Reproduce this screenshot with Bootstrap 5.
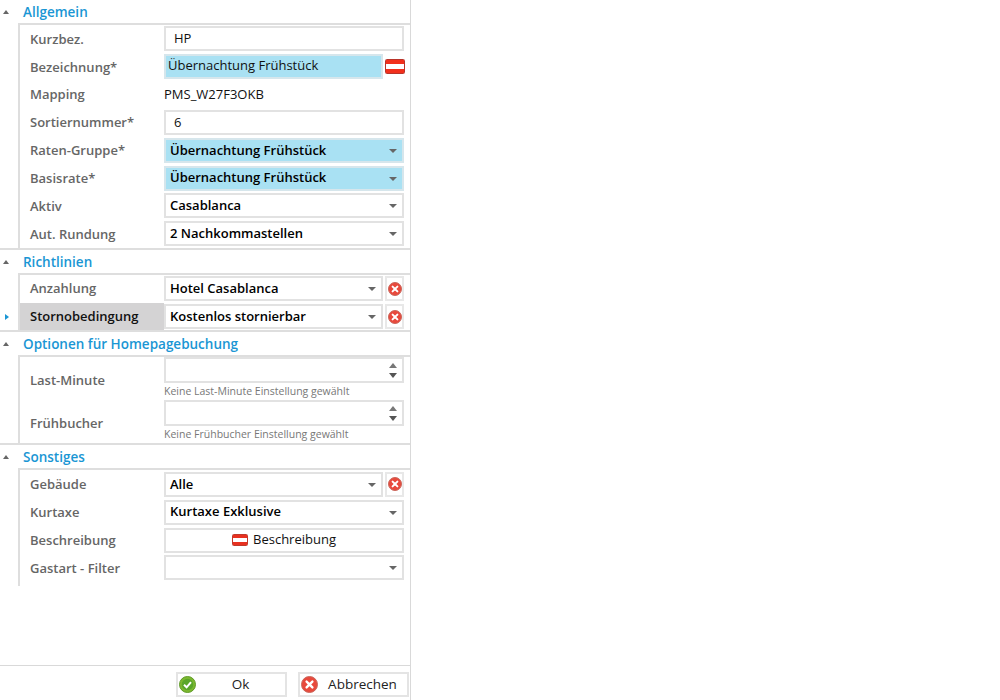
<!DOCTYPE html>
<html lang="de">
<head>
<meta charset="utf-8">
<title>Rate</title>
<link href="https://cdn.jsdelivr.net/npm/bootstrap@5.3.0/dist/css/bootstrap.min.css" rel="stylesheet">
<style>
body{background:#fff;font-family:"Open Sans","Noto Sans",sans-serif;font-size:13px;color:#222;overflow:hidden}
.sheet{width:411px;height:700px;border-right:1px solid #d9d9d9}
.sheet-main{height:665px}
.sec-head{height:24px;color:#1a96d4;font-weight:600;font-size:13.5px;padding-left:23px;position:relative;line-height:24px}
.tri-up{position:absolute;left:3px;top:10px;width:0;height:0;border-left:3.5px solid transparent;border-right:3.5px solid transparent;border-bottom:4px solid #666}
.sec-body{margin-left:18px;border-left:2px solid #dedede;border-top:2px solid #dedede;margin-top:-1px}
.sec-end{border-bottom:2px solid #dedede}
.frow{height:27.85px;position:relative}
.flabel{width:144px;padding-left:10px;color:#666;font-weight:600;flex:none;align-self:stretch;display:flex;align-items:center;padding-top:1px}
.flabel-on{background:#d4d3d4;color:#111}
.tri-right{position:absolute;left:-15px;top:11px;width:0;height:0;border-top:3.5px solid transparent;border-bottom:3.5px solid transparent;border-left:4px solid #1a96d4}
.fbox{width:240px;height:25px;border:2px solid #e2e2e2;background:#fff;flex:none;display:flex;align-items:center;position:relative;color:#111}
.fbox-short{width:219px}
.fbox-input{padding-left:8px;font-weight:400}
.fbox-select{padding-left:4px;font-weight:600;color:#000}
.fbox-select::after{content:"";position:absolute;right:5px;top:9px;border-left:4px solid transparent;border-right:4px solid transparent;border-top:4px solid #666}
.fbox-blue{background:#a9e1f3;border-color:#d6e6ec}
.fbox-note{width:219px;padding-left:2px;align-items:flex-start;font-weight:400;line-height:18px}
.plain-val{font-weight:400;color:#111}
.mini-btn{width:19px;height:25px;border:2px solid #e8e8e8;margin-left:2px;display:flex;align-items:center;justify-content:center;flex:none}
.flag-wrap{margin-left:2px;display:flex;align-items:center}
.spin{height:26px;position:relative}
.spin::before{content:"";position:absolute;right:5px;top:4px;border-left:4px solid transparent;border-right:4px solid transparent;border-bottom:5px solid #777}
.spin::after{content:"";position:absolute;right:5px;top:14px;border-left:4px solid transparent;border-right:4px solid transparent;border-top:5px solid #555}
.tall{height:43px;position:relative}
.tall-label{width:144px;padding-left:10px;color:#666;font-weight:600;flex:none;padding-top:14px}
.hint{font-size:10.5px;color:#777;line-height:14px;margin-top:1px}
.btn-text{font-weight:400;justify-content:center;gap:5px;padding:0}
.foot{height:35px;border-top:1px solid #d9d9d9;padding:6px 0 0 176px;gap:11px}
.foot-btn{height:25px;width:111px;border:2px solid #e4e4e4;background:#fff;font-size:13.5px;color:#222;display:flex;align-items:center;padding:0 0 0 1px;position:relative}
.foot-label{flex:1;text-align:center}
.blue-label{margin-left:0}
</style>
</head>
<body class="m-0">
<div class="sheet d-flex flex-column">
  <div class="sheet-main">
    <section class="sec-end">
      <div class="sec-head"><span class="tri-up"></span>Allgemein</div>
      <div class="sec-body">
        <div class="frow d-flex align-items-center"><div class="flabel">Kurzbez.</div><div class="fbox fbox-input">HP</div></div>
        <div class="frow d-flex align-items-center"><div class="flabel">Bezeichnung*</div><div class="fbox fbox-blue fbox-note">Übernachtung Frühstück</div>
          <div class="flag-wrap"><svg width="20" height="15" viewBox="0 0 20 15"><rect x=".5" y=".5" width="19" height="14" rx="1" fill="#fff" stroke="#b9342a"/><rect x="1" y="1" width="18" height="4" fill="#f2301c"/><rect x="1" y="10" width="18" height="4" fill="#f2301c"/></svg></div></div>
        <div class="frow d-flex align-items-center"><div class="flabel">Mapping</div><div class="plain-val">PMS_W27F3OKB</div></div>
        <div class="frow d-flex align-items-center"><div class="flabel">Sortiernummer*</div><div class="fbox fbox-input">6</div></div>
        <div class="frow d-flex align-items-center"><div class="flabel">Raten-Gruppe*</div><div class="fbox fbox-select fbox-blue">Übernachtung Frühstück</div></div>
        <div class="frow d-flex align-items-center"><div class="flabel">Basisrate*</div><div class="fbox fbox-select fbox-blue">Übernachtung Frühstück</div></div>
        <div class="frow d-flex align-items-center"><div class="flabel">Aktiv</div><div class="fbox fbox-select">Casablanca</div></div>
        <div class="frow d-flex align-items-center"><div class="flabel">Aut. Rundung</div><div class="fbox fbox-select">2 Nachkommastellen</div></div>
      </div>
    </section>
    <section class="sec-end">
      <div class="sec-head"><span class="tri-up"></span>Richtlinien</div>
      <div class="sec-body">
        <div class="frow d-flex align-items-center"><div class="flabel">Anzahlung</div><div class="fbox fbox-select fbox-short">Hotel Casablanca</div>
          <div class="mini-btn"><svg width="14" height="14" viewBox="0 0 14 14"><circle cx="7" cy="7" r="6.5" fill="#e8493c" stroke="#c9675c"/><path d="M4.6 4.6l4.8 4.8M9.4 4.6l-4.8 4.8" stroke="#fff" stroke-width="2" stroke-linecap="round"/></svg></div></div>
        <div class="frow d-flex align-items-center"><span class="tri-right"></span><div class="flabel flabel-on">Stornobedingung</div><div class="fbox fbox-select fbox-short">Kostenlos stornierbar</div>
          <div class="mini-btn"><svg width="14" height="14" viewBox="0 0 14 14"><circle cx="7" cy="7" r="6.5" fill="#e8493c" stroke="#c9675c"/><path d="M4.6 4.6l4.8 4.8M9.4 4.6l-4.8 4.8" stroke="#fff" stroke-width="2" stroke-linecap="round"/></svg></div></div>
      </div>
    </section>
    <section class="sec-end">
      <div class="sec-head"><span class="tri-up"></span>Optionen für Homepagebuchung</div>
      <div class="sec-body">
        <div class="tall d-flex"><div class="tall-label">Last-Minute</div><div><div class="fbox spin"></div><div class="hint">Keine Last-Minute Einstellung gewählt</div></div></div>
        <div class="tall d-flex"><div class="tall-label">Frühbucher</div><div><div class="fbox spin"></div><div class="hint">Keine Frühbucher Einstellung gewählt</div></div></div>
      </div>
    </section>
    <section>
      <div class="sec-head"><span class="tri-up"></span>Sonstiges</div>
      <div class="sec-body pb-1">
        <div class="frow d-flex align-items-center"><div class="flabel">Gebäude</div><div class="fbox fbox-select fbox-short">Alle</div>
          <div class="mini-btn"><svg width="14" height="14" viewBox="0 0 14 14"><circle cx="7" cy="7" r="6.5" fill="#e8493c" stroke="#c9675c"/><path d="M4.6 4.6l4.8 4.8M9.4 4.6l-4.8 4.8" stroke="#fff" stroke-width="2" stroke-linecap="round"/></svg></div></div>
        <div class="frow d-flex align-items-center"><div class="flabel">Kurtaxe</div><div class="fbox fbox-select">Kurtaxe Exklusive</div></div>
        <div class="frow d-flex align-items-center"><div class="flabel">Beschreibung</div><div class="fbox btn-text"><svg width="16" height="12" viewBox="0 0 16 12"><rect x=".5" y=".5" width="15" height="11" rx="1" fill="#fff" stroke="#c0392b"/><rect x="1" y="1" width="14" height="3" fill="#e8301f"/><rect x="1" y="8" width="14" height="3" fill="#e8301f"/></svg>Beschreibung</div></div>
        <div class="frow d-flex align-items-center"><div class="flabel">Gastart - Filter</div><div class="fbox fbox-select"></div></div>
      </div>
    </section>
  </div>
  <div class="foot d-flex">
    <button type="button" class="foot-btn"><svg width="17" height="17" viewBox="0 0 17 17"><circle cx="8.5" cy="8.5" r="8" fill="#7cb82f" stroke="#5f9a28"/><circle cx="8.5" cy="8.5" r="5.8" fill="#5aa62a"/><path d="M5 8.8l2.6 2.5L12 6.2" fill="none" stroke="#fff" stroke-width="2"/></svg><span class="foot-label">Ok</span></button>
    <button type="button" class="foot-btn"><svg width="17" height="17" viewBox="0 0 17 17"><circle cx="8.5" cy="8.5" r="8" fill="#e8493c" stroke="#c9675c"/><path d="M5.6 5.6l5.8 5.8M11.4 5.6l-5.8 5.8" stroke="#fff" stroke-width="2.4" stroke-linecap="round"/></svg><span class="foot-label">Abbrechen</span></button>
  </div>
</div>
<script src="https://cdn.jsdelivr.net/npm/bootstrap@5.3.0/dist/js/bootstrap.bundle.min.js"></script>
</body>
</html>
